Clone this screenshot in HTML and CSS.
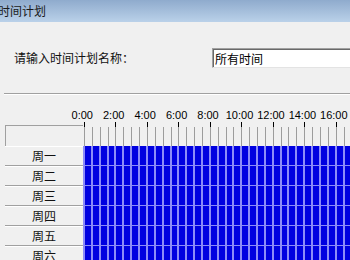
FILE: index.html
```html
<!DOCTYPE html>
<html lang="zh-CN">
<head>
    <meta charset="UTF-8">
    <title>时间计划</title>
    <link rel="stylesheet" href="styles.css">
</head>
<body>

    <div class="titlebar">时间计划</div>

    <div class="name-row">
        <span class="name-label">请输入时间计划名称：</span>
        <input type="text" class="name-input" value="所有时间">
    </div>

    <div class="separator"></div>

    <div class="schedule">
        <div class="hours">
            <span>0:00</span><span>2:00</span><span>4:00</span><span>6:00</span>
            <span>8:00</span><span>10:00</span><span>12:00</span><span>14:00</span>
            <span>16:00</span>
        </div>
        <div class="ruler">
            <div class="corner"></div>
            <div class="ticks">
                <div class="major"></div>
                <div class="minor"></div>
            </div>
        </div>
        <div class="day"><div class="day-name">周一</div><div class="slots"></div></div>
        <div class="day"><div class="day-name">周二</div><div class="slots"></div></div>
        <div class="day"><div class="day-name">周三</div><div class="slots"></div></div>
        <div class="day"><div class="day-name">周四</div><div class="slots"></div></div>
        <div class="day"><div class="day-name">周五</div><div class="slots"></div></div>
        <div class="day"><div class="day-name">周六</div><div class="slots"></div></div>
    </div>

</body>
</html>
```

FILE: styles.css
```css
body {
    margin: 0;
    width: 350px;
    height: 260px;
    overflow: hidden;
    background-color: #f0f0f0;
    font-family: "Noto Sans CJK SC", "Liberation Sans", sans-serif;
    font-size: 12px;
    color: #111;
}

/* window caption */
.titlebar {
    height: 22px;
    line-height: 22px;
    text-indent: -2px;
    font-size: 12px;
    color: #1a1a1a;
    background: linear-gradient(to bottom, #8fabcd, #bad1e9);
    white-space: nowrap;
}

.name-row {
    display: flex;
    align-items: center;
    margin-top: 26px;
    height: 20px;
}

.name-label {
    width: 198px;
    padding-left: 14px;
    flex: none;
    line-height: 20px;
}

.name-input {
    flex: none;
    width: 138px;
    height: 20px;
    box-sizing: border-box;
    margin: 0;
    padding: 0 0 0 2px;
    font-family: "Noto Sans CJK SC", sans-serif;
    font-size: 12px;
    color: #000;
    background-color: #fff;
    border: 1px solid #a0a0a0;
    border-right: none;
    border-bottom-color: #e3e3e3;
    box-shadow: inset 1px 1px 0 #696969;
    outline: none;
}

.separator {
    margin: 25px 0 0 4px;
    border-top: 1px solid #a0a0a0;
    border-bottom: 1px solid #fff;
}

/* hour labels, one every 2 hours */
.hours {
    display: flex;
    margin-top: 13px;
    padding-left: 66.5px;
    height: 14px;
    line-height: 14px;
    font-family: "Liberation Sans", sans-serif;
    font-size: 11px;
    color: #000;
    white-space: nowrap;
}

.hours span {
    flex: none;
    width: 31.46px;
    text-align: center;
}

.ruler {
    display: flex;
    height: 24px;
}

.corner {
    flex: none;
    width: 77px;
    margin: 3px 0 0 5px;
    border-top: 1px solid #a0a0a0;
    border-left: 1px solid #a0a0a0;
}

.ticks {
    flex: 1;
    display: flex;
    flex-direction: column;
}

.major {
    height: 5px;
    background: repeating-linear-gradient(to right, transparent 0 1px, #000 1px 2px, transparent 2px 31.46px);
}

.minor {
    flex: 1;
    background: repeating-linear-gradient(to right, transparent 0 1px, #9c9c9c 1px 2px, transparent 2px 7.865px);
}

/* one row per weekday */
.day {
    display: flex;
    height: 20px;
}

.day-name {
    flex: none;
    width: 78px;
    margin-left: 5px;
    box-sizing: border-box;
    text-align: center;
    line-height: 19px;
    border-bottom: 1px solid #a0a0a0;
    box-shadow: inset 0 1px 0 #fff;
}

.slots {
    flex: 1;
    box-sizing: border-box;
    border-bottom: 1px solid #8c8cf8;
    background: repeating-linear-gradient(to right, #8c8cf8 0 2px, #0000e0 2px 7.865px);
}
```
